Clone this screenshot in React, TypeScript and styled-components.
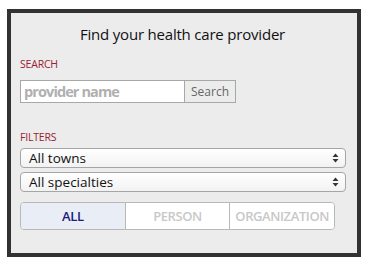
import React, { useState } from 'react';
import styled, { createGlobalStyle } from 'styled-components';

const GlobalStyle = createGlobalStyle`
    html, body {
        margin: 0;
        padding: 0;
        background: #ffffff;
    }
    body {
        font-family: "Open Sans", "Liberation Sans", sans-serif;
    }
`
const Page = styled.div`
    padding: 9px 9px 9px 7px;
    width: 370px;
    height: 266px;
    box-sizing: border-box;
`
const Frame = styled.div`
    width: 354px;
    height: 248px;
    box-sizing: border-box;
    border: 4px solid #323232;
    background: #ececec;
    padding: 11px 12px 0 9px;
`
const Title = styled.h1`
    margin: 0 0 13px 0;
    font-size: 15px;
    line-height: 20px;
    font-weight: 400;
    color: #111;
    text-align: center;
    letter-spacing: -0.2px;
`
const Label = styled.div<{ $gap: number }>`
    font-size: 10.5px;
    line-height: 14px;
    color: #9b2232;
    letter-spacing: -0.2px;
    margin-bottom: ${(p) => p.$gap}px;
`
const SearchRow = styled.div`
    display: flex;
    height: 23px;
    margin-bottom: 27px;
`
const SearchInput = styled.input`
    width: 164px;
    height: 23px;
    box-sizing: border-box;
    border: 1px solid #a8a8a8;
    border-right: none;
    background: #fff;
    padding: 0 3px;
    font-family: inherit;
    font-size: 14.5px;
    font-weight: 700;
    letter-spacing: -0.9px;
    color: #333;
    outline: none;
    &::placeholder {
        color: #b0b0b0;
    }
`
const SearchButton = styled.button`
    width: 52px;
    height: 23px;
    box-sizing: border-box;
    border: 1px solid #a8a8a8;
    background: #ececec;
    font-family: inherit;
    font-size: 12px;
    color: #666;
    padding: 0;
    cursor: pointer;
`
const SelectBox = styled.div`
    display: flex;
    align-items: center;
    justify-content: space-between;
    width: 326px;
    height: 20px;
    box-sizing: border-box;
    border: 1px solid #a6a6a6;
    border-radius: 4px;
    background: linear-gradient(#ffffff, #f2f2f2);
    padding: 0 6px 0 8px;
    margin-bottom: 4px;
    font-size: 13.5px;
    color: #111;
    cursor: pointer;
`
const Segments = styled.div`
    display: flex;
    width: 315px;
    height: 28px;
    box-sizing: border-box;
    border: 1px solid #b8b8b8;
    border-radius: 4px;
    overflow: hidden;
    margin-top: 10px;
`
const Segment = styled.button<{ $active: boolean }>`
    flex: 1;
    border: none;
    border-left: 1px solid #b8b8b8;
    &:first-child {
        border-left: none;
    }
    background: ${(p) => (p.$active ? '#e9edf5' : '#ffffff')};
    color: ${(p) => (p.$active ? '#1c1c7a' : '#c8c8c8')};
    font-family: inherit;
    font-size: 13px;
    font-weight: 600;
    letter-spacing: -0.4px;
    padding: 0;
    cursor: pointer;
`

const Arrows: React.FC = () => (
    <svg width="7" height="10" viewBox="0 0 7 10">
        <path d="M3.5 0.5 L6.5 4 L0.5 4 Z" fill="#333" />
        <path d="M3.5 9.5 L6.5 6 L0.5 6 Z" fill="#333" />
    </svg>
)

const kinds = ['ALL', 'PERSON', 'ORGANIZATION'];

export default function App() {
    const [kind, setKind] = useState<string>('ALL');

    return (
        <Page>
            <GlobalStyle />
            <Frame>
                <Title>Find your health care provider</Title>
                <Label $gap={9}>SEARCH</Label>
                <SearchRow>
                    <SearchInput placeholder="provider name" />
                    <SearchButton>Search</SearchButton>
                </SearchRow>
                <Label $gap={4}>FILTERS</Label>
                <SelectBox>
                    <span>All towns</span>
                    <Arrows />
                </SelectBox>
                <SelectBox>
                    <span>All specialties</span>
                    <Arrows />
                </SelectBox>
                <Segments>
                    {kinds.map((k) => (
                        <Segment key={k} $active={kind === k} onClick={() => setKind(k)}>
                            {k}
                        </Segment>
                    ))}
                </Segments>
            </Frame>
        </Page>
    );
}
